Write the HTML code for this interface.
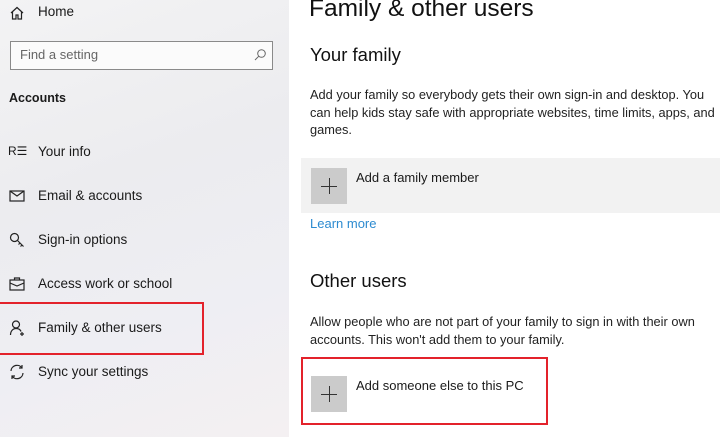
<!DOCTYPE html>
<html><head><meta charset="utf-8"><style>
*{margin:0;padding:0;box-sizing:border-box}
body{width:720px;height:437px;overflow:hidden;background:#fff;font-family:"Liberation Sans",sans-serif;color:#1a1a1a;position:relative}
.side{position:absolute;left:0;top:0;width:289px;height:437px;background:linear-gradient(160deg,#f3f3f4 0%,#ececef 40%,#eeeef3 70%,#f4f0f2 100%)}
.a{position:absolute;white-space:nowrap}
.t{font-size:13.5px}
.ic{position:absolute;left:9px;width:16px;height:16px}
.plus{position:absolute;width:36px;height:36px;background:#cbcbcb}
.plus:before{content:"";position:absolute;left:10px;top:17.5px;width:16px;height:1.3px;background:#333}
.plus:after{content:"";position:absolute;left:17.5px;top:10px;width:1.3px;height:16px;background:#333}
.p{font-size:12.8px;line-height:17.5px;color:#222}
</style></head><body>
<div class="side"></div>
<svg class="ic" style="top:5px" viewBox="0 0 16 16" fill="none" stroke="#222" stroke-width="1.2"><path d="M2 8L8 2.5 14 8M3.5 7v7h3.5v-4h2v4h3.5V7"/></svg>
<div class="a t" style="left:38px;top:4px">Home</div>
<div class="a" style="left:10px;top:41px;width:263px;height:29px;border:1.5px solid #8a8a8a;background:#fbfbfb"></div>
<div class="a" style="left:20px;top:47px;font-size:13px;color:#666">Find a setting</div>
<svg class="a" style="left:253px;top:48px" width="14" height="14" viewBox="0 0 14 14" fill="none" stroke="#666" stroke-width="1"><circle cx="8.5" cy="5.5" r="3.8"/><path d="M5.8 8.2L2 12"/></svg>
<div class="a" style="left:9px;top:91px;font-size:12.5px;font-weight:bold">Accounts</div>
<div class="a" style="left:8px;top:144px;font-size:12px">R☰</div>
<div class="a t" style="left:38px;top:144px">Your info</div>
<svg class="ic" style="top:188px" viewBox="0 0 16 16" fill="none" stroke="#222" stroke-width="1.2"><rect x="1" y="3" width="14" height="10"/><path d="M1 3l7 5 7-5"/></svg>
<div class="a t" style="left:38px;top:188px">Email &amp; accounts</div>
<svg class="ic" style="top:232px" viewBox="0 0 16 16" fill="none" stroke="#222" stroke-width="1.2"><circle cx="5.5" cy="5.5" r="4"/><path d="M8.5 8.5l6 6M11 11l-1.5 1.5M13 13l-1.5 1.5"/></svg>
<div class="a t" style="left:38px;top:232px">Sign-in options</div>
<svg class="ic" style="top:276px" viewBox="0 0 16 16" fill="none" stroke="#222" stroke-width="1.2"><rect x="1" y="4" width="14" height="10"/><path d="M5.5 4V2h5v2M1 7l7 3 7-3"/></svg>
<div class="a t" style="left:38px;top:276px">Access work or school</div>
<svg class="ic" style="top:320px" viewBox="0 0 16 16" fill="none" stroke="#222" stroke-width="1.2"><circle cx="7" cy="4.5" r="3.5"/><path d="M1.5 15c0-4 2.5-6.5 5.5-6.5s4.5 1.5 5 3M13 12v4M11 14h4"/></svg>
<div class="a t" style="left:38px;top:320px">Family &amp; other users</div>
<div class="a" style="left:-2px;top:302px;width:206px;height:53px;border:2px solid #e3222b"></div>
<svg class="ic" style="top:364px" viewBox="0 0 16 16" fill="none" stroke="#222" stroke-width="1.2"><path d="M2 7a6 6 0 0 1 11-3M14 9a6 6 0 0 1-11 3M13 1v3h-3M3 15v-3h3"/></svg>
<div class="a t" style="left:38px;top:364px">Sync your settings</div>

<div class="a" style="left:309px;top:-5px;font-size:24.5px;color:#111">Family &amp; other users</div>
<div class="a" style="left:310px;top:44px;font-size:18.5px;color:#111">Your family</div>
<div class="a p" style="left:310px;top:86px">Add your family so everybody gets their own sign-in and desktop. You<br>can help kids stay safe with appropriate websites, time limits, apps, and<br>games.</div>
<div class="a" style="left:301px;top:158px;width:419px;height:55px;background:#f2f2f2"></div>
<div class="plus" style="left:311px;top:168px"></div>
<div class="a" style="left:356px;top:170px;font-size:13px">Add a family member</div>
<div class="a" style="left:310px;top:216px;font-size:13px;color:#2d8bd0">Learn more</div>
<div class="a" style="left:310px;top:270px;font-size:18.5px;color:#111">Other users</div>
<div class="a p" style="left:310px;top:313px">Allow people who are not part of your family to sign in with their own<br>accounts. This won't add them to your family.</div>
<div class="plus" style="left:311px;top:376px"></div>
<div class="a" style="left:356px;top:378px;font-size:13px">Add someone else to this PC</div>
<div class="a" style="left:301px;top:357px;width:247px;height:68px;border:2px solid #e3222b"></div>
</body></html>
